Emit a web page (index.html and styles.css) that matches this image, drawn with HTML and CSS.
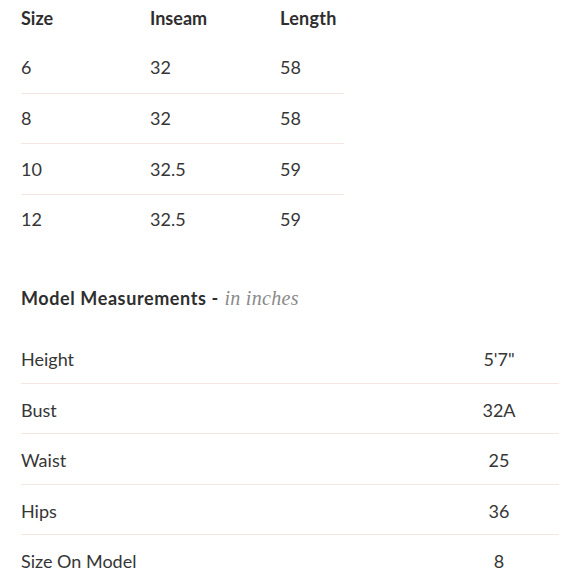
FILE: index.html
```html
<!DOCTYPE html>
<html>
<head>
<meta charset="utf-8">
<link rel="stylesheet" href="styles.css">
</head>
<body>
<div class="page">
  <div class="size-table">
    <div class="row head">
      <div class="c1">Size</div><div class="c2">Inseam</div><div class="c3">Length</div>
    </div>
    <div class="row data">
      <div class="c1">6</div><div class="c2">32</div><div class="c3">58</div>
    </div>
    <div class="row data line">
      <div class="c1">8</div><div class="c2">32</div><div class="c3">58</div>
    </div>
    <div class="row data line">
      <div class="c1">10</div><div class="c2">32.5</div><div class="c3">59</div>
    </div>
    <div class="row data line">
      <div class="c1">12</div><div class="c2">32.5</div><div class="c3">59</div>
    </div>
  </div>

  <h2 class="model-title"><span class="strong">Model Measurements -</span> <em>in inches</em></h2>

  <div class="model-table">
    <div class="mrow"><div class="label">Height</div><div class="value">5'7"</div></div>
    <div class="mrow line"><div class="label">Bust</div><div class="value">32A</div></div>
    <div class="mrow line"><div class="label">Waist</div><div class="value">25</div></div>
    <div class="mrow line"><div class="label">Hips</div><div class="value">36</div></div>
    <div class="mrow line"><div class="label">Size On Model</div><div class="value">8</div></div>
  </div>
</div>
</body>
</html>
```

FILE: styles.css
```css
html, body {
  margin: 0;
  padding: 0;
  background: #ffffff;
}

.page {
  padding-left: 21px;
  font-family: Lato, "Liberation Sans", sans-serif;
  font-size: 18px;
  color: #363636;
}

.size-table {
  width: 323px;
}

.row {
  display: grid;
  grid-template-columns: 129px 130px 1fr;
  align-items: center;
  box-sizing: border-box;
}

.row.head {
  height: 36px;
  margin-bottom: 6px;
  font-weight: 700;
  color: #2e2e2e;
}

.row.head .c3 {
  letter-spacing: 0.3px;
}

.row.data {
  height: 50.5px;
}

.line {
  border-top: 1px solid #f3e6e3;
}

.model-title {
  margin: 0;
  padding: 43px 0 22px;
  line-height: 23px;
  font-size: 18px;
  font-weight: 400;
  color: #2e2e2e;
}

.model-title .strong {
  font-weight: 700;
  letter-spacing: 0.6px;
}

.model-title em {
  font-family: "Liberation Serif", "DejaVu Serif", serif;
  font-style: italic;
  font-weight: 400;
  color: #8a8a8a;
  margin-left: 1px;
  font-size: 20px;
  letter-spacing: 0.3px;
}

.model-table {
  width: 538px;
}

.mrow {
  display: grid;
  grid-template-columns: 1fr 120px;
  align-items: center;
  height: 50.5px;
  padding-top: 3px;
  box-sizing: border-box;
}

.mrow .value {
  text-align: center;
}
```
